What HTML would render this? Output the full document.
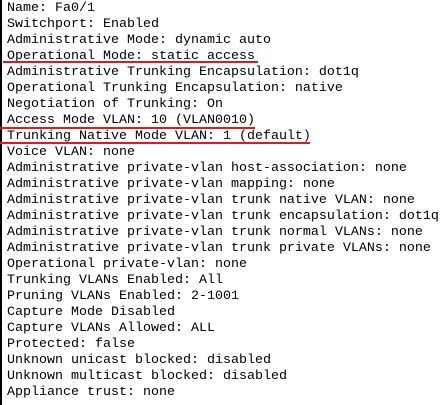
<!DOCTYPE html>
<html><head><meta charset="utf-8"><style>
html,body{margin:0;padding:0;background:#fff;}
body{width:445px;height:405px;position:relative;overflow:hidden;}
.b{position:absolute;left:0;top:0;width:2px;height:405px;background:#000;}
pre{margin:0;position:absolute;left:7px;top:1px;font-family:"Liberation Mono",monospace;font-size:13.33px;line-height:16px;color:#000;}
.r{position:absolute;height:2px;background:#e8141e;}
</style></head><body>
<div class="b"></div>
<pre>Name: Fa0/1
Switchport: Enabled
Administrative Mode: dynamic auto
Operational Mode: static access
Administrative Trunking Encapsulation: dot1q
Operational Trunking Encapsulation: native
Negotiation of Trunking: On
Access Mode VLAN: 10 (VLAN0010)
Trunking Native Mode VLAN: 1 (default)
Voice VLAN: none
Administrative private-vlan host-association: none
Administrative private-vlan mapping: none
Administrative private-vlan trunk native VLAN: none
Administrative private-vlan trunk encapsulation: dot1q
Administrative private-vlan trunk normal VLANs: none
Administrative private-vlan trunk private VLANs: none
Operational private-vlan: none
Trunking VLANs Enabled: All
Pruning VLANs Enabled: 2-1001
Capture Mode Disabled
Capture VLANs Allowed: ALL
Protected: false
Unknown unicast blocked: disabled
Unknown multicast blocked: disabled
Appliance trust: none</pre>
<div class="r" style="left:3px;top:61px;width:255px"></div>
<div class="r" style="left:0;top:127px;width:255px"></div>
<div class="r" style="left:0;top:142px;width:310px"></div>
</body></html>
